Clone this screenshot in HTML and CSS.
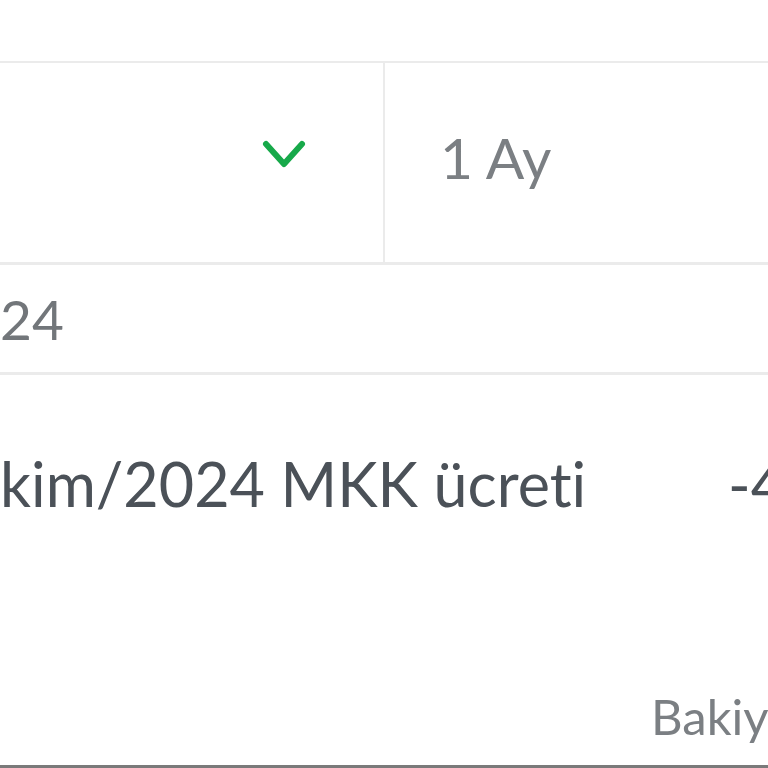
FILE: index.html
```html
<!DOCTYPE html>
<html lang="tr">
<head>
<meta charset="utf-8">
<link rel="stylesheet" href="styles.css">
</head>
<body>
<div class="page">
  <div class="top"></div>
  <div class="filters">
    <div class="cell cell-select">
      <svg class="chev" width="44" height="30" viewBox="0 0 44 30"><path d="M4 4 L22 24 L40 4" fill="none" stroke="#17a94a" stroke-width="6" stroke-linecap="round" stroke-linejoin="round"/></svg>
    </div>
    <div class="cell cell-period"><span class="period">1 Ay</span></div>
  </div>
  <div class="date-row"><span class="date">24</span></div>
  <div class="tx-row">
    <span class="tx-desc">kim/2024 MKK ücreti</span>
    <span class="tx-amt">-4</span>
  </div>
  <div class="balance-row"><span class="balance">Bakiye</span></div>
</div>
</body>
</html>
```
FILE: styles.css
```css
html, body {
  margin: 0;
  padding: 0;
  background: #ffffff;
}
.page {
  width: 768px;
  height: 768px;
  overflow: hidden;
  font-family: Lato, "Open Sans", sans-serif;
  font-variant-ligatures: none;
  display: flex;
  flex-direction: column;
  box-sizing: border-box;
  border-bottom: 3px solid #7a7a7a;
}
.top {
  height: 61px;
  flex: none;
}
.filters {
  flex: none;
  height: 199px;
  display: flex;
  border-top: 2px solid #ebebeb;
  border-bottom: 3px solid #ebebeb;
}
.cell {
  display: flex;
  align-items: center;
}
.cell-select {
  width: 385px;
  flex: none;
  box-sizing: border-box;
  border-right: 2px solid #ebebeb;
  justify-content: flex-end;
  padding-right: 77px;
}
.chev {
  display: block;
  margin-top: -16px;
}
.cell-period {
  flex: 1;
  padding-left: 55px;
}
.period {
  font-size: 57px;
  color: #7b7f83;
  margin-top: -12px;
}
.date-row {
  flex: none;
  height: 107px;
  display: flex;
  align-items: center;
  border-bottom: 3px solid #ebebeb;
}
.date {
  font-size: 55px;
  color: #72767a;
  margin-top: 0;
}
.tx-row {
  flex: none;
  height: 226px;
  display: flex;
  align-items: flex-start;
  padding-top: 72px;
  box-sizing: border-box;
}
.tx-desc {
  font-size: 61px;
  color: #4b5158;
  width: 728px;
  flex: none;
}
.tx-amt {
  font-size: 61px;
  color: #4b5158;
}
.balance-row {
  flex: 1;
  display: flex;
  align-items: flex-end;
  padding-left: 651px;
  padding-bottom: 20px;
}
.balance {
  font-size: 49px;
  color: #7b7f83;
}
```
